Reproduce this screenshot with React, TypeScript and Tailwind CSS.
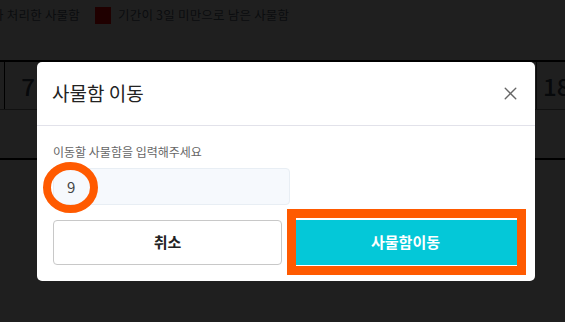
import React from 'react';
import { X } from 'lucide-react';

const App: React.FC = () => {
  return (
    <div className="relative h-[322px] w-[565px] overflow-hidden bg-white font-['Noto_Sans_CJK_KR',sans-serif]">
      {/* Legend */}
      <div className="-ml-[66px] flex h-[31px] items-center whitespace-nowrap text-[12.5px] text-[#5a6a7a]">
        <span className="mr-[7px] h-[17px] w-[16px] bg-[#1e6fd9]" />
        <span className="tracking-[0.2px]">관리자가 처리한 사물함</span>
        <span className="ml-[15px] mr-[7px] h-[17px] w-[16px] bg-[#ff0000]" />
        <span className="tracking-[0.2px]">기간이 3일 미만으로 남은 사물함</span>
      </div>

      {/* Locker table */}
      <div className="mt-[29px] border-y-2 border-black">
        <div className="flex h-[48px] border-b border-[#888] pl-[4px]">
          <div className="flex w-[47px] items-center justify-center border-l border-black text-[24px] font-medium text-[#3a4a5c]">
            7
          </div>
          <div className="flex-1" />
          <div className="flex w-[29px] items-center border-l border-[#555] pl-[6px] text-[24px] font-medium text-[#3a4a5c]">
            18
          </div>
        </div>
        <div className="h-[48px]" />
      </div>

      {/* Overlay */}
      <div className="absolute inset-0 bg-black/[0.88]" />

      {/* Modal */}
      <div className="absolute left-[37px] top-[62px] w-[498px] rounded-[5px] bg-white">
        <div className="flex h-[64px] items-center justify-between border-b border-[#e2e2ea] pl-[15px] pr-[14px]">
          <h2 className="text-[19px] text-[#222]">사물함 이동</h2>
          <button className="text-[#666]">
            <X size={21} strokeWidth={1.6} />
          </button>
        </div>

        <div className="px-[16px] pb-[16px] pt-[17px]">
          <p className="text-[12px] leading-[18px] text-[#666]">이동할 사물함을 입력해주세요</p>
          <input
            readOnly
            value="9"
            className="mt-[7px] block h-[37px] w-[237px] rounded-[4px] border border-[#e8eef4] bg-[#f6f9fd] pl-[13px] text-[15px] text-[#444] outline-none"
          />
          <div className="mt-[15px] flex gap-[10px]">
            <button className="h-[45px] flex-1 rounded-[4px] border border-[#c8c8c8] bg-white text-[15px] font-bold text-[#222]">
              취소
            </button>
            <button className="h-[45px] flex-1 bg-[#04c8d8] text-[15px] font-bold text-white">
              사물함이동
            </button>
          </div>
        </div>

        {/* Highlight marks */}
        <svg className="absolute left-[6px] top-[100px]" width="55" height="51" viewBox="0 0 55 51">
          <ellipse cx="27.5" cy="25.5" rx="23.5" ry="21.5" fill="none" stroke="#ff5a00" strokeWidth="8" />
        </svg>
        <div className="absolute left-[250px] top-[147px] h-[66px] w-[239px] border-[9px] border-[#ff5a00]" />
      </div>
    </div>
  );
};

export default App;
